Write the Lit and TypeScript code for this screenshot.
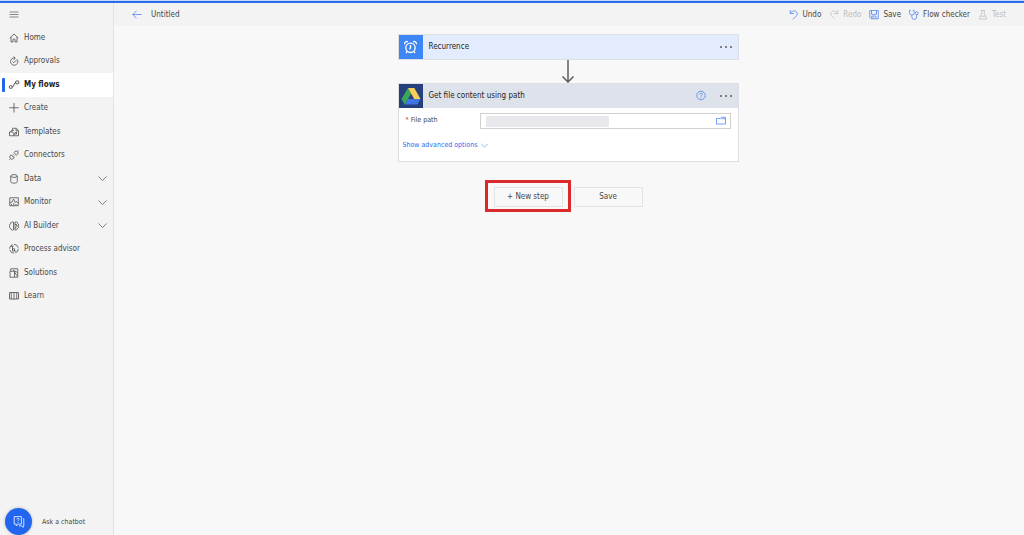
import { LitElement, html, css, svg, nothing, type SVGTemplateResult } from 'lit';
import { customElement, property } from 'lit/decorators.js';
import { classMap } from 'lit/directives/class-map.js';

/* Line icons on a 20 x 20 grid. */
const icons: Record<string, SVGTemplateResult> = {
  menu: svg`<path d="M1 4h18M1 9h18M1 14h18"/>`,
  home: svg`<path d="M1.500 10 10 2l8.500 8M4 8v10h4v-4.500a2 2 0 0 1 4 0V18h4V8"/>`,
  approvals: svg`<path d="M16 6.500A7.300 7.300 0 1 1 8 4.200h4M9 .8l3.500 3.400L9 7.600M7 11l2.500 2.500L15 8"/>`,
  flows: svg`<circle cx="3.500" cy="14" r="3"/><rect x="13.500" y="2" width="6" height="5.500" rx="1"/><path d="M6.500 14c4.500 0 2.500-9 7-9"/>`,
  create: svg`<path d="M10 0v19M.5 9.500h19"/>`,
  templates: svg`<path d="M7 7V2.500h7.500L19 7v10.500H9.500M14 3v4.500h4.500M1 10h6l2.500 2.500v5H1zM4 10V7.500h4l2-1.500M10 13l5-3v4h-5"/>`,
  connectors: svg`<path d="M4 9.500 10.500 16l-1.500 1.200a4 4 0 0 1-6-.2 4 4 0 0 1-.2-6zM3 17l-2.500 2.500M10 5l1.500-1.800a4 4 0 0 1 5.500 0 4 4 0 0 1 0 5.500L15 10.500zM17 3.200 19.500.7M6.500 11l2.500-2.500M9 13.500l2.500-2.500"/>`,
  data: svg`<ellipse cx="10" cy="4" rx="6.500" ry="2.800"/><path d="M3.500 4v11.500c0 1.600 3 2.800 6.500 2.800s6.500-1.200 6.500-2.800V4"/>`,
  monitor: svg`<path d="M1.500 1.500h17v16h-17zM1.500 12 6 10l3-6 3.500 7 2-2.500 4 4.500M5 17.500V14M9.500 17.500V12M14 17.500V14"/>`,
  ai: svg`<path d="M9 2v16M9 2.500C6 .5 3.500 2.500 3.800 5 .8 6 .5 9 1.500 10c-1.500 2.500 0 5 2.300 5.200.5 3 3.200 4.300 5.200 2.300M12 2v16M12 2.500c3-2 5.500 0 5.200 2.500 2.500 1 2.500 4 1.300 5 1.500 2.500.2 5-2 5.200-.5 3-2.800 4-4.500 2.300M12 7h3v3h3M12 13.500h3"/>`,
  process: svg`<circle cx="10" cy="9.500" r="8.800" stroke-dasharray="11 2.500"/><path d="M7 4v10h7.500M7 9.500h4V14M4 4.500h5"/>`,
  solutions: svg`<path d="M3.500 6V1.500h14v17h-6M17.500 9 8 4.500M2 6.500h9v12H2zM11 8l6 9"/>`,
  learn: svg`<path d="M10 3v14M10 3H1v13h7.500l1.500 1 1.500-1H19V3zM4.500 3v13M15.500 3v13"/>`,
  chevron: svg`<path d="m1 5.500 9 9 9-9"/>`,
  back: svg`<path d="M19 9H1.500M9 1.500 1.500 9 9 16.500"/>`,
  undo: svg`<path d="M2.500 0v7h7.500M2.500 7c3-5.500 9-6.500 12-3.500s2.500 6.500-.5 9L7.500 19"/>`,
  redo: svg`<path d="M17.500 0v7H10M17.500 7c-3-5.500-9-6.500-12-3.500S3 10 6 12.500l5 5"/>`,
  save: svg`<path d="M1.500 1h17v16.500H4L1.500 15zM5 1v7.500h10V1M5.500 17.500V12H14v5.500M8.500 13.500v4"/>`,
  checker: svg`<path d="M4 .8H1v4.700a4.700 4.700 0 0 0 9.400 0V.8h-3M5.700 10.200V14a4.800 4.800 0 0 0 9.600 0v-4.500"/><circle cx="15.500" cy="6.500" r="3"/>`,
  test: svg`<path d="M6 1h8M7.500 1v7L2.500 16.500v1.500h15v-1.500L12.500 8V1M5 12.500h10"/>`,
  help: svg`<circle cx="10" cy="9" r="8.500"/><path d="M7.500 7c0-3.500 5-3.500 5-.5 0 2-2.500 2-2.500 4.500M10 12.500v2"/>`,
  folder: svg`<path d="M1 5h8.500l2-2.500H19V16H1zM11 5.500h8"/>`,
  clock: svg`<circle cx="10" cy="10.500" r="7.200"/><path d="M10 6v4.500L8.500 13M1 5a3.200 3.200 0 0 1 5-3.500M19 5a3.200 3.200 0 0 0-5-3.500M5 16l-2 2.500M15 16l2 2.500"/>`,
  chat: svg`<path d="M2 1h12v12.500H8.500l-3 3v-3H2zM16.500 4.500H18v12h-1v2.500L14.500 16.500H10M6.200 5.500c0-2.300 3.800-2.300 3.800 0S8.100 7 8.100 9M8.100 10.500v1.500"/>`,
};

@customElement('line-icon')
export class LineIcon extends LitElement {
  @property() name = 'menu';
  static styles = css`
    :host { display: block; flex: none; width: 10px; height: 10px; }
    svg { display: block; width: 100%; height: 100%; overflow: visible; fill: none; stroke: currentColor; stroke-width: var(--stroke, 1.5); }
  `;
  render() {
    return html`<svg viewBox="0 0 20 20" aria-hidden="true">${icons[this.name]}</svg>`;
  }
}

interface NavItem { label: string; icon: string; active?: boolean; expandable?: boolean }

const navItems: NavItem[] = [
  { label: 'Home', icon: 'home' },
  { label: 'Approvals', icon: 'approvals' },
  { label: 'My flows', icon: 'flows', active: true },
  { label: 'Create', icon: 'create' },
  { label: 'Templates', icon: 'templates' },
  { label: 'Connectors', icon: 'connectors' },
  { label: 'Data', icon: 'data', expandable: true },
  { label: 'Monitor', icon: 'monitor', expandable: true },
  { label: 'AI Builder', icon: 'ai', expandable: true },
  { label: 'Process advisor', icon: 'process' },
  { label: 'Solutions', icon: 'solutions' },
  { label: 'Learn', icon: 'learn' },
];

const commands = [
  { label: 'Undo', icon: 'undo' },
  { label: 'Redo', icon: 'redo', disabled: true },
  { label: 'Save', icon: 'save' },
  { label: 'Flow checker', icon: 'checker' },
  { label: 'Test', icon: 'test', disabled: true },
];

@customElement('app-root')
export class AppRoot extends LitElement {
  static styles = css`
    :host {
      display: flex; flex-direction: column; box-sizing: border-box; min-height: 100vh;
      border-top: 1px solid #c9d9f7;
      font: 8px/12px "DejaVu Sans Condensed", "Noto Sans", sans-serif; color: #484644; background: #f8f8f8;
    }
    * { box-sizing: border-box; }
    button, input { font: inherit; color: inherit; border: 0; margin: 0; padding: 0; background: none; }
    a { color: inherit; text-decoration: none; }
    .accent { flex: none; height: 2px; background: #2b6cee; }
    .shell { flex: 1; display: grid; grid-template-columns: 114px 1fr; }
    .side { display: flex; flex-direction: column; background: #f3f3f3; border-right: 1px solid #e3e3e3; }
    .menu { height: 23px; padding-left: 9px; align-self: flex-start; color: #666; }
    .nav { list-style: none; margin: 0; padding: 0; display: grid; grid-auto-rows: 1fr; height: 282px; }
    .link { display: flex; align-items: center; gap: 5px; height: 100%; padding: 0 6px 0 9px; }
    .link.active { position: relative; background: #fff; font-weight: bold; color: #252423; }
    .link.active::before { content: ""; position: absolute; left: 2px; top: 5px; bottom: 5px; width: 3px; border-radius: 1px; background: #2266ee; }
    .label { flex: 1; }
    .chev { width: 9px; height: 9px; }
    .bot { display: flex; align-items: center; gap: 10px; margin-top: auto; padding-left: 5px; font-size: 7px; text-align: left; }
    .bubble { display: grid; place-items: center; width: 27px; height: 27px; border-radius: 50%; background: #2266f0; color: #e4edff; box-shadow: 0 0 3px #0004; }
    .bubble line-icon { width: 12px; height: 12px; }
    .main { display: flex; flex-direction: column; min-width: 0; }
    .bar { display: flex; align-items: center; height: 23px; padding: 0 18px; background: #f3f3f3; }
    .back { display: flex; align-items: center; gap: 9px; }
    .blue { color: #4a80f5; }
    .commands { display: flex; gap: 8px; margin-left: auto; }
    .command { display: flex; align-items: center; gap: 4px; }
    .command:disabled, .command:disabled line-icon { color: #bdbdbd; }
    .canvas { display: flex; flex-direction: column; align-items: center; padding: 8px 14px 8px 12px; }
    .card { width: 100%; max-width: 341px; border: 1px solid #dcdfe4; background: #fff; }
    .head { display: flex; align-items: center; height: 24px; padding-right: 6px; color: #252423; }
    .head.trigger { background: #e2ecfd; }
    .head.action { background: #dee2ea; }
    .tile { display: grid; place-items: center; align-self: stretch; width: 24px; margin-right: 6px; }
    .tile line-icon { width: 13px; height: 13px; }
    .trigger .tile { background: #3f86f5; color: #fff; --stroke: 2; }
    .action .tile { background: #25407c; }
    .drive { width: 20px; height: 18px; display: block; }
    .title { flex: 1; margin: 0; font: inherit; }
    .more { display: flex; gap: 3px; margin-left: 14px; }
    .dot { width: 2px; height: 2px; border-radius: 1px; background: #605e5c; }
    .arrow { display: block; width: 14px; height: 23px; fill: none; stroke: #605e5c; stroke-width: 1.5; }
    .body { display: flex; flex-direction: column; align-items: flex-start; gap: 10px; padding: 5px 7px 10px 4px; }
    .field { display: flex; width: 100%; font-size: 7px; }
    .name { flex: none; width: 77px; padding: 1px 0 0 3px; }
    .req { color: #d13438; }
    .box { flex: 1; display: flex; align-items: center; justify-content: space-between; height: 16px; padding: 0 4px 0 5px; border: 1px solid #d2d0ce; background: #fff; }
    .value { width: 123px; height: 11px; background: #e9e9ed; }
    .advanced { display: flex; align-items: center; gap: 4px; font-size: 7px; color: #2b6cee; }
    .advanced line-icon { width: 7px; height: 7px; }
    .actions { display: flex; gap: 11px; margin-top: 25px; }
    .step { width: 69px; height: 20px; border: 1px solid #e3e3e3; text-align: center; }
    .mark { display: grid; position: relative; }
    .mark::after { content: ""; position: absolute; inset: -7px -8px -5px -9px; border: 3px solid #d9292a; pointer-events: none; }
  `;

  private more(label: string) {
    return html`<button class="more" aria-label=${label}><span class="dot"></span><span class="dot"></span><span class="dot"></span></button>`;
  }

  render() {
    return html`
      <div class="accent"></div>
      <div class="shell">
        <aside class="side">
          <button class="menu" aria-label="Toggle navigation"><line-icon name="menu"></line-icon></button>
          <ul class="nav">
            ${navItems.map((n) => html`<li>
              <a href="#" class=${classMap({ link: true, active: !!n.active })}>
                <line-icon name=${n.icon}></line-icon><span class="label">${n.label}</span>
                ${n.expandable ? html`<line-icon class="chev" name="chevron"></line-icon>` : nothing}
              </a></li>`)}
          </ul>
          <button class="bot"><span class="bubble"><line-icon name="chat"></line-icon></span>Ask a chatbot</button>
        </aside>
        <div class="main">
          <header class="bar">
            <a class="back" href="#"><line-icon class="blue" name="back"></line-icon>Untitled</a>
            <div class="commands">
              ${commands.map((c) => html`<button class="command" ?disabled=${!!c.disabled}>
                <line-icon class="blue" name=${c.icon}></line-icon>${c.label}</button>`)}
            </div>
          </header>
          <main class="canvas">
            <section class="card">
              <div class="head trigger">
                <span class="tile"><line-icon name="clock"></line-icon></span>
                <h2 class="title">Recurrence</h2>
                ${this.more('Recurrence options')}
              </div>
            </section>
            <svg class="arrow" viewBox="0 0 14 23" aria-hidden="true"><path d="M7 0v22M1.500 16.500 7 22l5.500-5.500"/></svg>
            <section class="card">
              <div class="head action">
                <span class="tile">
                  <svg class="drive" viewBox="0 0 20 18" aria-hidden="true">
                    <path fill="#3aa757" d="M7 1 .5 12l3.200 5.500L10.200 6.500z"/>
                    <path fill="#f8ce5a" d="M7 1h6.300l6.200 11h-6.300z"/>
                    <path fill="#3f76e4" d="M6.900 12h12.600l-3.200 5.500H3.700z"/>
                  </svg>
                </span>
                <h2 class="title">Get file content using path</h2>
                <button class="blue" aria-label="Help"><line-icon name="help"></line-icon></button>
                ${this.more('Get file content options')}
              </div>
              <div class="body">
                <div class="field">
                  <label class="name" for="path"><span class="req">*</span> File path</label>
                  <div class="box">
                    <input class="value" id="path" type="text">
                    <button class="blue" aria-label="Browse"><line-icon name="folder"></line-icon></button>
                  </div>
                </div>
                <button class="advanced">Show advanced options <line-icon name="chevron"></line-icon></button>
              </div>
            </section>
            <div class="actions">
              <div class="mark"><button class="step">+ New step</button></div>
              <button class="step">Save</button>
            </div>
          </main>
        </div>
      </div>`;
  }
}
